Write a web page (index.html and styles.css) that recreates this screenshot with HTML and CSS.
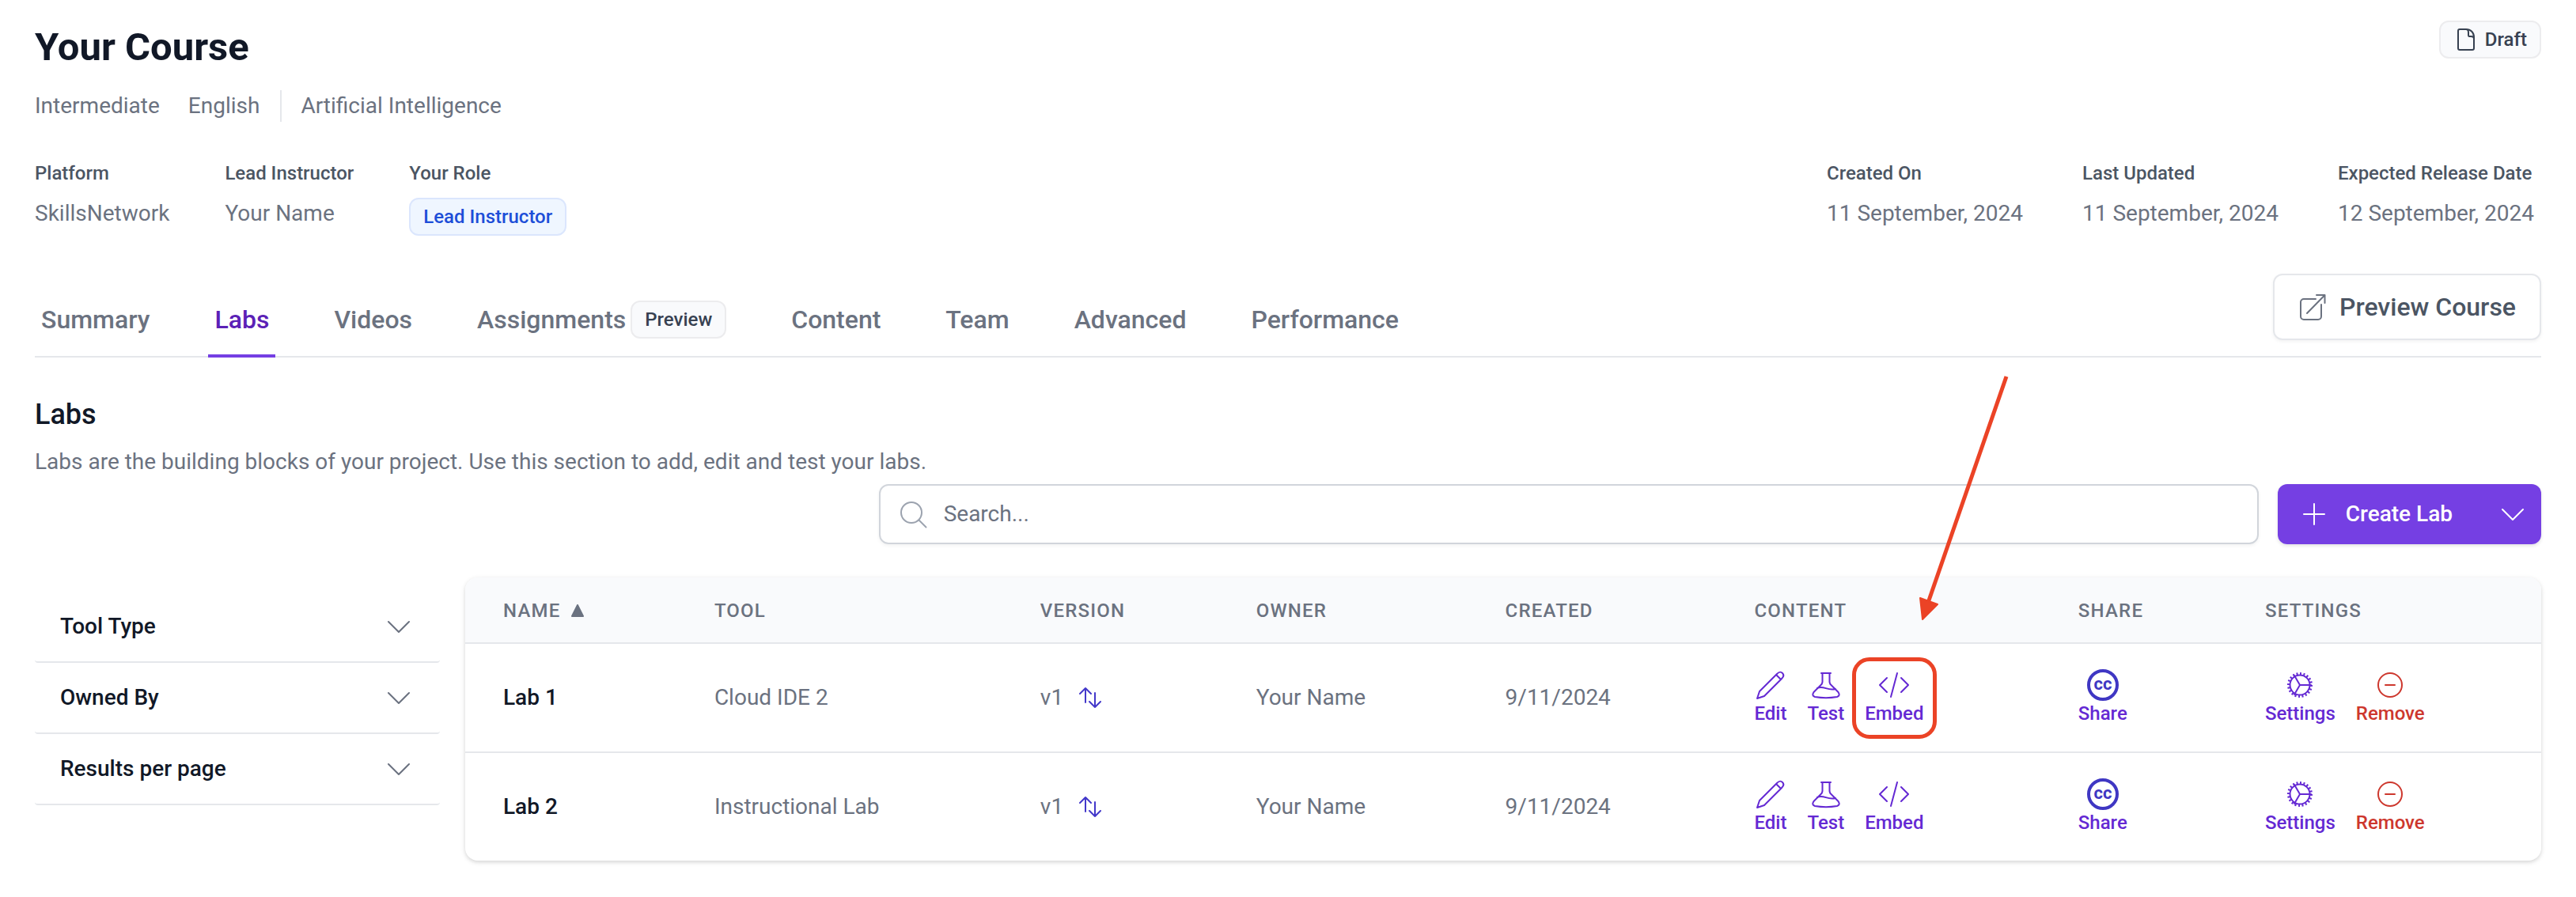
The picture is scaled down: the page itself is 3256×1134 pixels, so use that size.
FILE: index.html
```html
<!DOCTYPE html>
<html lang="en">
<head>
<meta charset="utf-8">
<title>Your Course – Labs</title>
<link rel="stylesheet" href="styles.css">
</head>
<body>
<svg class="sprite" aria-hidden="true">
  <symbol id="i-chevron" viewBox="0 0 32 32"><path d="M3 10l13 13 13-13"/></symbol>
  <symbol id="i-versions" viewBox="0 0 28 28"><path d="M8 20V2M1 9l7-7 7 7M20 8v18M13 19l7 7 7-7"/></symbol>
  <symbol id="i-edit" viewBox="0 0 40 40"><path d="M3 37l3-9L28 6c3-3 5-3 7-1s2 4-1 7L12 34l-9 3zM27 7l6 6"/></symbol>
  <symbol id="i-test" viewBox="0 0 40 40"><path d="M14 5h12M15.500 5v11c0 1-.5 2-1 3L4.500 29c-2 3-1.500 5 1.500 6 9 1.500 19 1.500 28 0 3-1 3.500-3 1.500-6L25.500 19c-.5-1-1-2-1-3V5M9 24c8-4 13 4 23 1"/></symbol>
  <symbol id="i-embed" viewBox="0 0 40 40"><path d="M11 11l-9 9 9 9M29 11l9 9-9 9M24 5l-8 30"/></symbol>
  <symbol id="i-share" viewBox="0 0 40 40"><circle cx="20" cy="20" r="18"/></symbol>
  <symbol id="i-settings" viewBox="0 0 40 40"><circle cx="20" cy="20" r="12.500"/><circle class="teeth" cx="20" cy="20" r="14.500" pathLength="100"/><path d="M20 20h14M20 20L13 8M20 20l-7 12"/></symbol>
  <symbol id="i-remove" viewBox="0 0 40 40"><circle cx="20" cy="20" r="15"/><path d="M14 20h12"/></symbol>
</svg>

<main class="page">
  <header>
    <div class="title-row">
      <h1>Your Course</h1>
      <span class="badge">
        <svg class="icon-32" viewBox="0 0 32 32" aria-hidden="true"><path d="M16 3H8a2 2 0 0 0-2 2v22a2 2 0 0 0 2 2h16a2 2 0 0 0 2-2V13c0-6-4-10-10-10 2 0 3 2 3 4v3c0 1 0 2 1 2h2c2 0 4 1 4 3"/></svg>
        Draft
      </span>
    </div>
    <div class="meta">
      <span>Intermediate</span><span>English</span><span class="topic">Artificial Intelligence</span>
    </div>
    <div class="details">
      <dl>
        <div><dt>Platform</dt><dd>SkillsNetwork</dd></div>
        <div><dt>Lead Instructor</dt><dd>Your Name</dd></div>
        <div><dt>Your Role</dt><dd><span class="badge badge-blue">Lead Instructor</span></dd></div>
      </dl>
      <dl class="dates">
        <div><dt>Created On</dt><dd>11 September, 2024</dd></div>
        <div><dt>Last Updated</dt><dd>11 September, 2024</dd></div>
        <div><dt>Expected Release Date</dt><dd>12 September, 2024</dd></div>
      </dl>
    </div>
    <div class="tab-bar">
      <nav class="tabs">
        <a href="#">Summary</a>
        <a href="#" class="active" aria-current="page">Labs</a>
        <a href="#">Videos</a>
        <a href="#">Assignments <span class="badge">Preview</span></a>
        <a href="#">Content</a>
        <a href="#">Team</a>
        <a href="#">Advanced</a>
        <a href="#">Performance</a>
      </nav>
      <button class="preview" type="button">
        <svg class="icon-36" viewBox="0 0 36 36" aria-hidden="true"><path d="M22 8H7a4 4 0 0 0-4 4v18a4 4 0 0 0 4 4h18a4 4 0 0 0 4-4V15M11 26L33.500 3M23 3h10.500v10"/></svg>
        Preview Course
      </button>
    </div>
  </header>

  <section>
    <h2>Labs</h2>
    <p class="intro">Labs are the building blocks of your project. Use this section to add, edit and test your labs.</p>

    <div class="toolbar">
      <div class="toolbar-main">
        <label class="search">
          <svg class="icon-36" viewBox="0 0 36 36" aria-hidden="true"><circle cx="15" cy="16" r="13"/><path d="M24.500 25.500l9 9"/></svg>
          <input type="search" placeholder="Search..." aria-label="Search labs">
        </label>
        <div class="split">
          <button class="create" type="button">
            <svg class="icon-28" viewBox="0 0 28 28" aria-hidden="true"><path d="M14 1v26M1 14h26"/></svg>
            Create Lab
          </button>
          <button class="more" type="button" aria-label="More options">
            <svg class="icon-32" aria-hidden="true"><use href="#i-chevron"/></svg>
          </button>
        </div>
      </div>
    </div>

    <div class="content">
      <aside class="filters">
        <button type="button">Tool Type <svg class="icon-32" aria-hidden="true"><use href="#i-chevron"/></svg></button>
        <button type="button">Owned By <svg class="icon-32" aria-hidden="true"><use href="#i-chevron"/></svg></button>
        <button type="button">Results per page <svg class="icon-32" aria-hidden="true"><use href="#i-chevron"/></svg></button>
      </aside>

      <table class="labs">
        <colgroup>
          <col class="c-name"><col class="c-tool"><col class="c-version"><col class="c-owner"><col class="c-created"><col class="c-content"><col class="c-share"><col class="c-settings">
        </colgroup>
        <thead>
          <tr>
            <th scope="col">Name <svg class="sort" viewBox="0 0 16 16" aria-hidden="true"><path d="M8 1l7 14H1z"/></svg></th>
            <th scope="col">Tool</th>
            <th scope="col">Version</th>
            <th scope="col">Owner</th>
            <th scope="col">Created</th>
            <th scope="col">Content</th>
            <th scope="col">Share</th>
            <th scope="col">Settings</th>
          </tr>
        </thead>
        <tbody>
          <tr>
            <td class="name">Lab 1</td>
            <td>Cloud IDE 2</td>
            <td><span class="version">v1 <svg class="icon-28" aria-hidden="true"><use href="#i-versions"/></svg></span></td>
            <td>Your Name</td>
            <td>9/11/2024</td>
            <td>
              <div class="actions">
                <a href="#"><svg aria-hidden="true"><use href="#i-edit"/></svg>Edit</a>
                <a href="#"><svg aria-hidden="true"><use href="#i-test"/></svg>Test</a>
                <a href="#" class="marked"><svg aria-hidden="true"><use href="#i-embed"/></svg>Embed
                  <span class="mark-box"></span>
                  <svg class="mark-arrow" viewBox="0 0 130 320" aria-hidden="true"><path class="shaft" d="M117 6L18 292"/><path class="head" d="M11 313L8 286l22 8z"/></svg>
                </a>
              </div>
            </td>
            <td><div class="actions"><a href="#"><svg class="cc" aria-hidden="true"><use href="#i-share"/><text x="20" y="26">cc</text></svg>Share</a></div></td>
            <td>
              <div class="actions">
                <a href="#"><svg aria-hidden="true"><use href="#i-settings"/></svg>Settings</a>
                <a href="#" class="danger"><svg aria-hidden="true"><use href="#i-remove"/></svg>Remove</a>
              </div>
            </td>
          </tr>
          <tr>
            <td class="name">Lab 2</td>
            <td>Instructional Lab</td>
            <td><span class="version">v1 <svg class="icon-28" aria-hidden="true"><use href="#i-versions"/></svg></span></td>
            <td>Your Name</td>
            <td>9/11/2024</td>
            <td>
              <div class="actions">
                <a href="#"><svg aria-hidden="true"><use href="#i-edit"/></svg>Edit</a>
                <a href="#"><svg aria-hidden="true"><use href="#i-test"/></svg>Test</a>
                <a href="#"><svg aria-hidden="true"><use href="#i-embed"/></svg>Embed</a>
              </div>
            </td>
            <td><div class="actions"><a href="#"><svg class="cc" aria-hidden="true"><use href="#i-share"/><text x="20" y="26">cc</text></svg>Share</a></div></td>
            <td>
              <div class="actions">
                <a href="#"><svg aria-hidden="true"><use href="#i-settings"/></svg>Settings</a>
                <a href="#" class="danger"><svg aria-hidden="true"><use href="#i-remove"/></svg>Remove</a>
              </div>
            </td>
          </tr>
        </tbody>
      </table>
    </div>
  </section>
</main>
</body>
</html>
```
FILE: styles.css
```css
* { box-sizing: border-box; }

body {
  margin: 0;
  background: #fff;
  color: #6b7280;
  font: 400 28px/40px Roboto, "Liberation Sans", sans-serif;
}

h1, h2, p, dl, dd { margin: 0; }
a { color: inherit; text-decoration: none; }
button, input { font: inherit; color: inherit; }
button { cursor: pointer; }

svg {
  flex: none;
  fill: none;
  stroke: currentColor;
  stroke-width: 2px;
  stroke-linecap: round;
  stroke-linejoin: round;
}

.sprite { position: absolute; width: 0; height: 0; }
.icon-28 { width: 28px; height: 28px; }
.icon-32 { width: 32px; height: 32px; }
.icon-36 { width: 36px; height: 36px; }

.page { padding: 26px 44px 44px; }

/* Course header */
.title-row {
  display: flex;
  justify-content: space-between;
  align-items: flex-start;
}

h1 {
  color: #111827;
  font-size: 49px;
  font-weight: 700;
  line-height: 68px;
}

.badge {
  display: inline-flex;
  align-items: center;
  gap: 8px;
  height: 48px;
  padding: 0 16px;
  border: 2px solid #ececee;
  border-radius: 12px;
  background: #f9fafc;
  color: #374151;
  font-size: 24px;
  font-weight: 500;
}

.badge-blue {
  border-color: #dbe6fd;
  background: #eff6ff;
  color: #1d4ed8;
}

.meta {
  display: flex;
  gap: 36px;
  margin-top: 20px;
}

.topic {
  margin-left: -10px;
  padding-left: 24px;
  border-left: 2px solid #e5e7eb;
}

.details {
  display: flex;
  justify-content: space-between;
  margin-top: 48px;
}

.details dl { display: flex; gap: 70px; }
.details .dates { gap: 66px; }
.dates div { min-width: 257px; }

dt {
  margin-bottom: 14px;
  color: #4b5563;
  font-size: 24px;
  font-weight: 500;
  line-height: 34px;
}

dd { display: flex; }

/* Tabs */
.tab-bar {
  display: flex;
  justify-content: space-between;
  align-items: flex-end;
  margin-top: 48px;
  border-bottom: 2px solid #e5e7eb;
}

.tabs {
  display: flex;
  gap: 66px;
  margin-bottom: -2px;
  font-size: 32px;
  font-weight: 500;
  line-height: 48px;
}

.tabs a {
  display: flex;
  align-items: center;
  gap: 6px;
  padding: 0 8px 20px;
  border-bottom: 4px solid transparent;
}

.tabs .active {
  border-color: #753fe3;
  color: #5b21b6;
}

.preview {
  display: flex;
  align-items: center;
  gap: 16px;
  height: 84px;
  margin-bottom: 20px;
  padding: 0 30px;
  border: 2px solid #e5e7eb;
  border-radius: 12px;
  background: #fff;
  box-shadow: 0 2px 4px rgb(0 0 0 / 5%);
  color: #4b5563;
  font-size: 32px;
  font-weight: 500;
}

.preview svg { color: #6b7280; }

/* Labs section */
h2 {
  margin-top: 48px;
  color: #111827;
  font-size: 36px;
  font-weight: 500;
  line-height: 48px;
}

.intro { margin-top: 16px; }

.toolbar {
  display: grid;
  grid-template-columns: 1fr 2fr;
  gap: 16px;
  margin-top: 8px;
}

.toolbar-main {
  display: flex;
  grid-column: 2;
  gap: 24px;
}

.search {
  display: flex;
  flex: 1;
  align-items: center;
  gap: 20px;
  height: 76px;
  padding: 0 24px;
  border: 2px solid #d1d5db;
  border-radius: 12px;
  box-shadow: 0 2px 4px rgb(0 0 0 / 5%);
}

.search svg { color: #9ca3af; }

.search input {
  flex: 1;
  min-width: 0;
  padding: 0;
  border: 0;
  outline: 0;
  background: none;
}

.search input::placeholder { color: #6b7280; opacity: 1; }

.split {
  display: flex;
  border-radius: 12px;
  box-shadow: 0 2px 4px rgb(0 0 0 / 12%);
}

.split button {
  display: flex;
  align-items: center;
  border: 0;
  background: #753fe3;
  color: #fff;
  font-weight: 500;
}

.create {
  gap: 26px;
  padding: 0 40px 0 32px;
  border-radius: 12px 0 0 12px;
}

.more {
  padding: 0 20px;
  border-radius: 0 12px 12px 0;
}

.content {
  display: grid;
  grid-template-columns: 512px 1fr;
  gap: 32px;
  align-items: start;
  margin-top: 42px;
}

.filters { padding-top: 18px; }

.filters button {
  display: flex;
  justify-content: space-between;
  align-items: center;
  width: 100%;
  height: 90px;
  padding: 0 36px 0 32px;
  border: 0;
  border-bottom: 2px solid #e5e7eb;
  border-radius: 4px;
  background: none;
  color: #111827;
  font-weight: 500;
}

.filters svg { color: #6b7280; }

/* Labs table */
.labs {
  width: 100%;
  border-spacing: 0;
  border-radius: 16px;
  box-shadow: 0 2px 6px rgb(0 0 0 / 12%), 0 2px 4px rgb(0 0 0 / 6%);
  table-layout: fixed;
}

.c-name, .c-owner, .c-created { width: 12%; }
.c-tool { width: 15.7%; }
.c-version { width: 10.4%; }
.c-content { width: 15.6%; }
.c-share { width: 9%; }

.labs th, .labs td {
  padding: 0;
  text-align: left;
  vertical-align: middle;
}

.labs th {
  height: 84px;
  padding-top: 2px;
  border-bottom: 2px solid #e5e7eb;
  background: #f9fafc;
  font-size: 24px;
  font-weight: 500;
  letter-spacing: .05em;
  line-height: 32px;
  text-transform: uppercase;
}

.labs th:first-child, .labs td:first-child { padding-left: 48px; }
.labs th:first-child { border-top-left-radius: 16px; }
.labs th:last-child { border-top-right-radius: 16px; }
.labs td { height: 138px; }
.labs tr:not(:last-child) td { border-bottom: 2px solid #e5e7eb; }
.labs tr:last-child td { height: 136px; }

.labs .name { color: #111827; font-weight: 500; }

.sort {
  width: 16px;
  height: 16px;
  margin-left: 6px;
  fill: currentColor;
}

.version {
  display: flex;
  align-items: center;
  gap: 20px;
}

.version svg { color: #4338ca; }

.actions {
  display: flex;
  gap: 26px;
  color: #6429d3;
  font-size: 24px;
  font-weight: 500;
  line-height: 32px;
}

.actions a {
  display: flex;
  flex-direction: column;
  align-items: center;
}

.actions svg {
  width: 40px;
  height: 40px;
}

.actions .danger { color: #cd372d; }
.teeth { stroke-width: 3px; stroke-linecap: butt; stroke-dasharray: 2.2 2.8; }
.actions .cc { color: #3f37c3; stroke-width: 4px; }

.cc text {
  fill: currentColor;
  stroke: none;
  font-size: 22px;
  font-weight: 700;
  text-anchor: middle;
}

/* Callout drawn over the first Embed action */
.marked { position: relative; }

.mark-box {
  position: absolute;
  inset: -15px -16px -16px;
  border: 5px solid #eb4326;
  border-radius: 22px;
}

.actions .mark-arrow {
  position: absolute;
  top: -376px;
  left: 62px;
  width: 130px;
  height: 320px;
  color: #eb4326;
  pointer-events: none;
}

.shaft { stroke-width: 5px; stroke-linecap: butt; }
.head { fill: currentColor; }
```
